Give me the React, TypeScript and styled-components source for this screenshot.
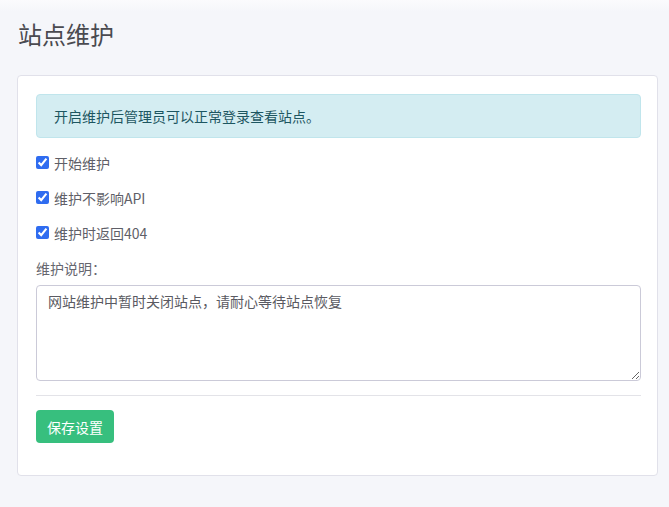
import React, { useState } from 'react';
import styled, { createGlobalStyle } from 'styled-components';

const GlobalStyle = createGlobalStyle`
  html, body {
    margin: 0;
    padding: 0;
    background: #f5f6fa;
  }
  body {
    font-family: "Noto Sans CJK SC", "Noto Sans", "Liberation Sans", sans-serif;
    color: #555;
  }
`;

const options = [
  { key: 'enable', label: '开始维护' },
  { key: 'api', label: '维护不影响API' },
  { key: 'notFound', label: '维护时返回404' },
];

const App = () => {
  const [checked, setChecked] = useState<Record<string, boolean>>({
    enable: true,
    api: true,
    notFound: true,
  });
  const [note, setNote] = useState('网站维护中暂时关闭站点，请耐心等待站点恢复');

  return (
    <Page>
      <GlobalStyle />
      <PageTitle>站点维护</PageTitle>
      <Card>
        <Alert>开启维护后管理员可以正常登录查看站点。</Alert>
        {options.map((opt) => (
          <CheckRow key={opt.key}>
            <Checkbox
              type="checkbox"
              checked={checked[opt.key]}
              onChange={(e) => setChecked({ ...checked, [opt.key]: e.target.checked })}
            />
            <span>{opt.label}</span>
          </CheckRow>
        ))}
        <FieldLabel>维护说明：</FieldLabel>
        <TextArea value={note} onChange={(e) => setNote(e.target.value)} />
        <Divider />
        <SaveButton type="button">保存设置</SaveButton>
      </Card>
    </Page>
  );
};

export default App;

const Page = styled.div`
  min-height: 507px;
  box-sizing: border-box;
  padding: 17px 11px 31px 17px;
  background: linear-gradient(#fbfbfd, #f5f6fa 12px);
`;

const PageTitle = styled.h1`
  margin: 0 0 24px 1px;
  font-size: 24px;
  line-height: 34px;
  font-weight: 400;
  color: #4a4a50;
`;

const Card = styled.div`
  background: #fff;
  border: 1px solid #e1e1ea;
  border-radius: 4px;
  padding: 18px 16px 32px 18px;
  display: flex;
  flex-direction: column;
  align-items: flex-start;
`;

const Alert = styled.div`
  align-self: stretch;
  box-sizing: border-box;
  height: 44px;
  display: flex;
  align-items: center;
  padding: 0 17px;
  background: #d4edf2;
  border: 1px solid #c0e5ec;
  border-radius: 4px;
  color: #1d5661;
  font-size: 14px;
  margin-bottom: 7px;
`;

const CheckRow = styled.label`
  display: flex;
  align-items: center;
  gap: 5px;
  height: 35px;
  font-size: 14px;
  color: #5f5f68;
  cursor: pointer;
`;

const Checkbox = styled.input`
  width: 13px;
  height: 13px;
  margin: 0;
  accent-color: #2f6cf0;
`;

const FieldLabel = styled.div`
  font-size: 14px;
  color: #66666e;
  margin: 8px 0 7px;
  line-height: 20px;
`;

const TextArea = styled.textarea`
  align-self: stretch;
  box-sizing: border-box;
  height: 96px;
  margin: 0;
  padding: 5px 11px;
  border: 1px solid #cbcad8;
  border-radius: 4px;
  font-family: "Noto Sans CJK SC", "Noto Sans", "Liberation Sans", sans-serif;
  font-size: 14px;
  line-height: 20px;
  color: #5a5a62;
  resize: vertical;
  outline: none;
`;

const Divider = styled.hr`
  align-self: stretch;
  margin: 14px 0;
  border: none;
  border-top: 1px solid #e3e3e8;
`;

const SaveButton = styled.button`
  height: 33px;
  padding: 0 11px;
  border: none;
  border-radius: 4px;
  background: #37bf7e;
  color: #fff;
  font-family: "Noto Sans CJK SC", "Noto Sans", "Liberation Sans", sans-serif;
  font-size: 14px;
  cursor: pointer;
`;
